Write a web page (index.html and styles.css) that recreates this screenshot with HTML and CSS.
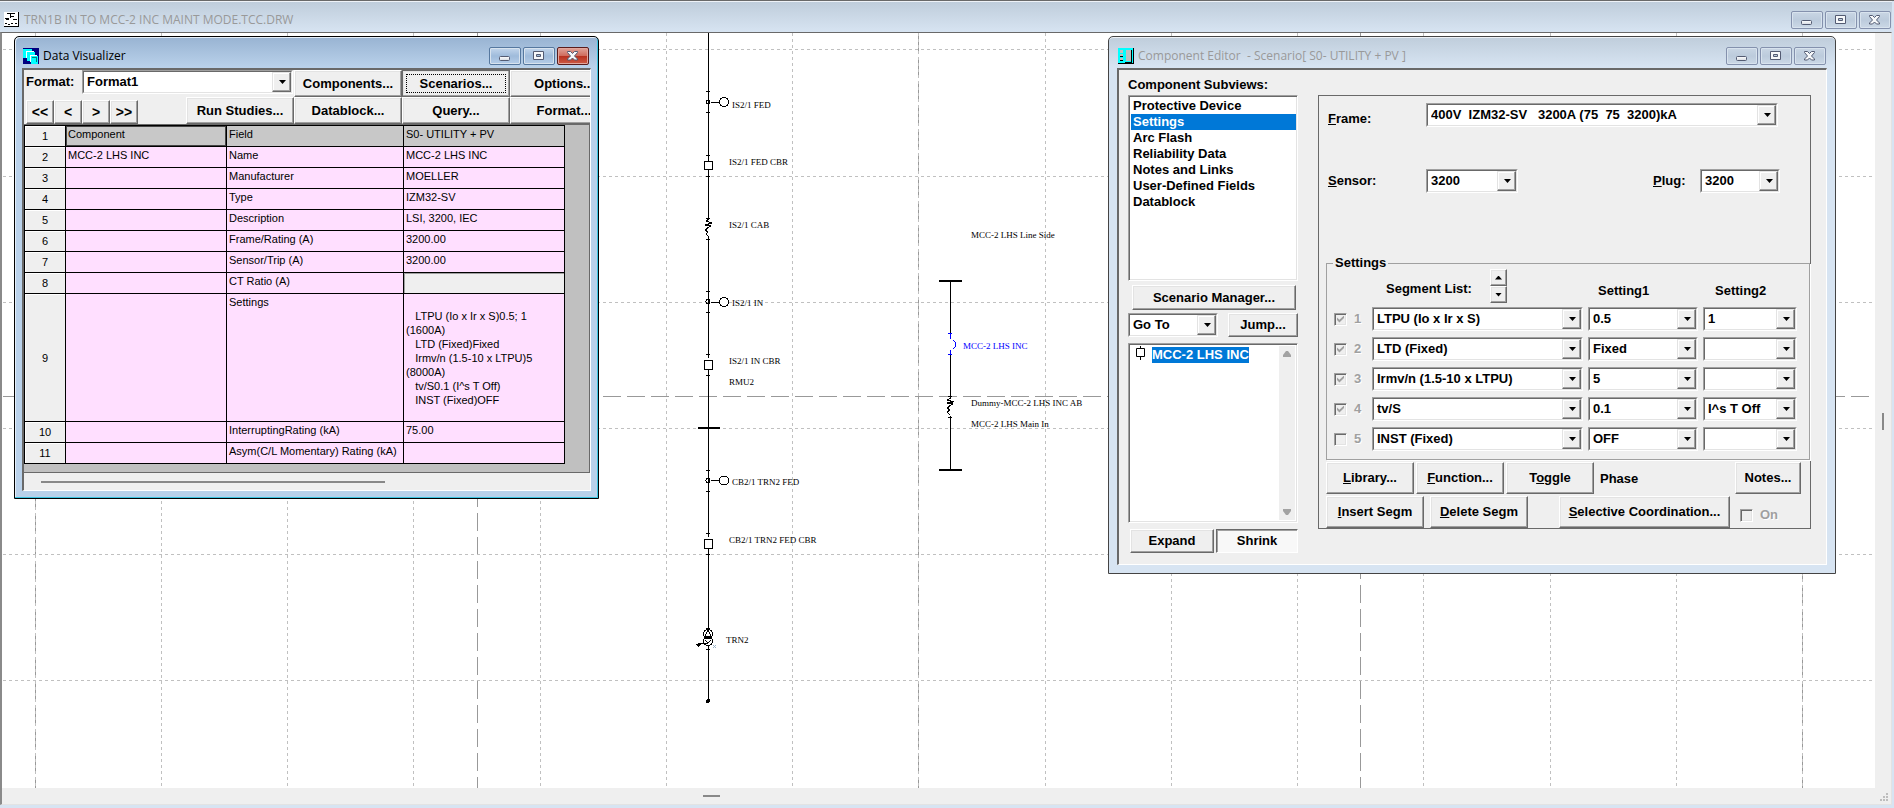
FILE: index.html
```html
<!DOCTYPE html>
<html lang="en">
<head>
<meta charset="utf-8">
<title>TRN1B IN TO MCC-2 INC MAINT MODE.TCC.DRW</title>
<link rel="stylesheet" href="styles.css">
</head>
<body>
<svg class="defs" width="0" height="0" aria-hidden="true">
  <defs>
    <linearGradient id="capfill" x1="0" y1="0" x2="0" y2="1"><stop offset="0" stop-color="#fff"/><stop offset="1" stop-color="#d5dae2"/></linearGradient>
    <symbol id="ic-min" viewBox="0 0 14 12"><rect x="1.5" y="6.5" width="10" height="4" rx="1" fill="url(#capfill)" stroke="#535b72"/></symbol>
    <symbol id="ic-max" viewBox="0 0 14 12"><path d="M1.5 1.500h10v8h-10zM4.500 4.500v2h4v-2z" fill="#f6f8fa" fill-rule="evenodd" stroke="#535b72"/></symbol>
    <symbol id="ic-close" viewBox="0 0 14 12"><path d="M1.500 1.500h3l2 2 2-2h3v1l-3 3.500 3 3v1h-3l-2-2-2 2h-3v-1l3-3-3-3.500z" fill="#f6f8fa" stroke="#535b72"/></symbol>
  </defs>
</svg>
<main class="app">
  <header class="titlebar">
    <svg class="app-icon" width="15" height="15" viewBox="0 0 15 15" shape-rendering="crispEdges" aria-hidden="true"><path d="M0 0h15v15H0z" fill="#fff"/><path d="M14.500 0v14.500H0" stroke="#000" fill="none"/><path d="M3 1.500h8M6.500 2v4M1 6.500h4M7 4.500h3M2 7.500h3M9 7.500h4M1 11.500h2M4 12.500h2M7 11.500h2M11 11.500h2" stroke="#000" fill="none"/></svg>
    <h1 class="title muted">TRN1B IN TO MCC-2 INC MAINT MODE.TCC.DRW</h1>
    <div class="caps">
      <button class="cap" aria-label="Minimize"><svg width="14" height="12"><use href="#ic-min"/></svg></button>
      <button class="cap" aria-label="Maximize"><svg width="14" height="12"><use href="#ic-max"/></svg></button>
      <button class="cap" aria-label="Close"><svg width="14" height="12"><use href="#ic-close"/></svg></button>
    </div>
  </header>
  <div class="workspace">
    <svg class="drawing" role="img" aria-label="One-line diagram">
      <g transform="translate(-2 -33)">
        <g class="grid-major">
          <path d="M35.500 33v755M477.500 33v755M918.500 33v755M1360.500 33v755M1802.500 33v755M3 396.500h1868"/>
        </g>
        <g class="grid-minor">
          <path d="M35.500 33v755M161.500 33v755M287.500 33v755M413.500 33v755M540.500 33v755M666.500 33v755M792.500 33v755M918.500 33v755M1045.500 33v755M1171.500 33v755M1297.500 33v755M1423.500 33v755M1550.500 33v755M1676.500 33v755M1802.500 33v755"/>
          <path d="M3 49.500h1870M3 176.500h1870M3 302.500h1870M3 428.500h1870M3 554.500h1870M3 680.500h1870"/>
        </g>
        <g class="wire">
          <path d="M708.500 33v128M708.500 170v49M708.500 236v122M708.500 370v167M708.500 549v82M708.500 646v55"/>
          <path d="M706 91.500h4M706 112.500h4M706 155.500h4M706 176.500h4M706 218.500h4M706 239.500h4M706 291.500h4M706 312.500h4M706 354.500h4M706 375.500h4M706 470.500h4M706 491.500h4M706 533.500h4M706 554.500h4M706 628.500h4M706 649.500h4"/>
          <path d="M704.500 161.500h8v8h-8zM704.500 360.500h8v9h-8zM704.500 539.500h8v9h-8z" fill="#fff"/>
          <path d="M711 102.500h9M711 302.500h9M711 480.500h9"/>
          <g fill="#fff"><circle cx="724" cy="102" r="4.500"/><circle cx="724" cy="302" r="4.500"/><circle cx="724" cy="480.500" r="4.500"/></g>
          <g fill="none"><circle cx="708" cy="102" r="2"/><circle cx="708" cy="301.500" r="2"/><circle cx="708" cy="480.500" r="2"/></g>
          <path d="M698 427.500h22" stroke-width="2"/>
          <path d="M708.500 219l-2 2 5 2-6 2 5 1-3 2-2 2 2 2-1 2 1 2" fill="none"/>
          <g fill="none"><circle cx="708" cy="634" r="4.500"/><circle cx="708" cy="641" r="4.500"/><path d="M708 630l-3 6h6zM705 640l3 3 3-3M698 643.500h10"/></g>
          <path d="M695 644h6l-3 3zM704 636h8v3h-8z" fill="#000" stroke="none"/>
          <path d="M713 645l3 3M716 645l-3 3" stroke="#9ab4c8"/>
          <circle cx="708" cy="701" r="2" fill="#000" stroke="none"/>
          <path d="M939 281h23M939 470h23" stroke-width="2"/>
          <path d="M950.500 281v52M950.500 354v45M950.500 416v54M948 396.500h4M948 417.500h4"/>
          <path d="M950.500 398l-3 2 6 2-6 1 5 1-3 2-2 2 2 2-2 2 2 3" fill="none"/>
          <path class="selected" d="M948 333.500h4M950.500 334v5M953 340q6 4 0 9M950.500 350v4M948 354.500h4" fill="none"/>
        </g>
        <g class="tags">
          <text x="732" y="108">IS2/1 FED</text>
          <text x="729" y="165">IS2/1 FED CBR</text>
          <text x="729" y="228">IS2/1 CAB</text>
          <text x="732" y="306">IS2/1 IN</text>
          <text x="729" y="364">IS2/1 IN CBR</text>
          <text x="729" y="385">RMU2</text>
          <text x="732" y="485">CB2/1 TRN2 FED</text>
          <text x="729" y="543">CB2/1 TRN2 FED CBR</text>
          <text x="726" y="643">TRN2</text>
          <text x="971" y="238">MCC-2 LHS Line Side</text>
          <text class="selected-tag" x="963" y="349">MCC-2 LHS INC</text>
          <text x="971" y="406">Dummy-MCC-2 LHS INC AB</text>
          <text x="971" y="427">MCC-2 LHS Main In</text>
        </g>
      </g>
    </svg>
    <div class="vbar"><span class="vthumb"></span></div>
    <div class="hbar"><span class="hthumb"></span></div>
    <svg class="grip" width="9" height="9" viewBox="0 0 9 9" aria-hidden="true"><path d="M6 0h2v2H6zM3 3h2v2H3zM6 3h2v2H6zM0 6h2v2H0zM3 6h2v2H3zM6 6h2v2H6z" fill="#bdbdbd"/></svg>
  </div>

  <section class="window visualizer" aria-label="Data Visualizer">
    <header class="wintitle">
      <svg width="16" height="16" viewBox="0 0 16 16" shape-rendering="crispEdges" aria-hidden="true"><path d="M0 0h16v16H0z" fill="#000080"/><path d="M0 1h9v3H5v6H0z" fill="#00ffff"/><path d="M4 4h8v3H8v6H4z" fill="#00ffff"/><path d="M8 8h7v8H8z" fill="#00ffff"/><path d="M3.500 10V3.500H11M7.500 14V7.500H14" stroke="#fff" fill="none"/><path d="M9 9.500h4v4" stroke="#008080" fill="none"/></svg>
      <h2 class="title">Data Visualizer</h2>
      <div class="caps">
        <button class="cap" aria-label="Minimize"><svg width="14" height="12"><use href="#ic-min"/></svg></button>
        <button class="cap" aria-label="Maximize"><svg width="14" height="12"><use href="#ic-max"/></svg></button>
        <button class="cap cap-close" aria-label="Close"><svg width="14" height="12"><use href="#ic-close"/></svg></button>
      </div>
    </header>
    <div class="client">
      <div class="toolbar">
        <label class="format-label" for="format">Format:</label>
        <span class="combo format-combo"><select id="format"><option>Format1</option></select></span>
        <button class="btn tool">Components...</button>
        <button class="btn tool focused">Scenarios...</button>
        <button class="btn tool">Options...</button>
      </div>
      <div class="toolbar second">
        <div class="nav"><button class="btn">&lt;&lt;</button><button class="btn">&lt;</button><button class="btn">&gt;</button><button class="btn">&gt;&gt;</button></div>
        <button class="btn tool">Run Studies...</button>
        <button class="btn tool">Datablock...</button>
        <button class="btn tool">Query...</button>
        <button class="btn tool">Format...</button>
      </div>
      <div class="sheet">
        <table>
          <colgroup><col class="c-num"><col class="c-comp"><col class="c-field"><col class="c-value"></colgroup>
          <tr class="head"><th>1</th><td class="current">Component</td><td>Field</td><td>S0- UTILITY + PV</td></tr>
          <tr><th>2</th><td>MCC-2 LHS INC</td><td>Name</td><td>MCC-2 LHS INC</td></tr>
          <tr><th>3</th><td></td><td>Manufacturer</td><td>MOELLER</td></tr>
          <tr><th>4</th><td></td><td>Type</td><td>IZM32-SV</td></tr>
          <tr><th>5</th><td></td><td>Description</td><td>LSI, 3200, IEC</td></tr>
          <tr><th>6</th><td></td><td>Frame/Rating (A)</td><td>3200.00</td></tr>
          <tr><th>7</th><td></td><td>Sensor/Trip (A)</td><td>3200.00</td></tr>
          <tr><th>8</th><td></td><td>CT Ratio (A)</td><td class="disabled"></td></tr>
          <tr class="tall"><th>9</th><td></td><td>Settings</td><td class="lines">
   LTPU (Io x Ir x S)0.5; 1
(1600A)
   LTD (Fixed)Fixed
   Irmv/n (1.5-10 x LTPU)5
(8000A)
   tv/S0.1 (I^s T Off)
   INST (Fixed)OFF</td></tr>
          <tr><th>10</th><td></td><td>InterruptingRating (kA)</td><td>75.00</td></tr>
          <tr><th>11</th><td></td><td>Asym(C/L Momentary) Rating (kA)</td><td></td></tr>
        </table>
      </div>
      <div class="sheetbar"><span></span></div>
    </div>
  </section>

  <section class="window editor" aria-label="Component Editor">
    <header class="wintitle">
      <svg width="16" height="16" viewBox="0 0 16 16" shape-rendering="crispEdges" aria-hidden="true"><path d="M0 0h16v16H0z" fill="#000"/><path d="M0 0h15v15H0z" fill="#00ffff"/><path d="M2 2h3v3H2zM2 6h3v3H2zM2 10h3v3H2zM8 2h5v11H8z" fill="#c0c0c0"/><path d="M2 8.500h3M2 12.500h3M7 14.500h6.500V2" stroke="#000" fill="none"/></svg>
      <h2 class="title muted">Component Editor&nbsp; - Scenario[ S0- UTILITY + PV ]</h2>
      <div class="caps">
        <button class="cap" aria-label="Minimize"><svg width="14" height="12"><use href="#ic-min"/></svg></button>
        <button class="cap" aria-label="Maximize"><svg width="14" height="12"><use href="#ic-max"/></svg></button>
        <button class="cap" aria-label="Close"><svg width="14" height="12"><use href="#ic-close"/></svg></button>
      </div>
    </header>
    <div class="client editor-body">
      <div class="side">
        <h3 class="side-title" id="subviews">Component Subviews:</h3>
        <ul class="well subviews" aria-labelledby="subviews">
          <li>Protective Device</li><li class="on">Settings</li><li>Arc Flash</li><li>Reliability Data</li><li>Notes and Links</li><li>User-Defined Fields</li><li>Datablock</li>
        </ul>
        <button class="btn manager">Scenario Manager...</button>
        <div class="jump-row">
          <span class="combo"><select aria-label="Go To"><option>Go To</option></select></span>
          <button class="btn">Jump...</button>
        </div>
        <div class="well tree">
          <div class="node"><svg width="10" height="14" viewBox="0 0 10 14" aria-hidden="true"><path d="M.5 2.500h8v8h-8zM4.500 0v3M4.500 10v4" fill="#fff" stroke="#000"/></svg><span class="on">MCC-2 LHS INC</span></div>
          <div class="treebar"><svg width="8" height="6" viewBox="0 0 8 6"><path d="M3 0h2l3 4v2H0V4z" fill="#a3a3a3"/></svg><svg width="8" height="6" viewBox="0 0 8 6"><path d="M3 6h2l3-4V0H0v2z" fill="#a3a3a3"/></svg></div>
        </div>
        <div class="size-row"><button class="btn">Expand</button><button class="btn pressed">Shrink</button></div>
      </div>
      <form class="panel">
        <div class="line">
          <label class="frame-label" for="frame"><u>F</u>rame:</label>
          <span class="combo frame"><select id="frame"><option>400V&nbsp; IZM32-SV&nbsp;&nbsp; 3200A (75&nbsp; 75&nbsp; 3200)kA</option></select></span>
        </div>
        <div class="line">
          <label for="sensor"><u>S</u>ensor:</label>
          <span class="combo sensor"><select id="sensor"><option>3200</option></select></span>
          <label class="plug-label" for="plug"><u>P</u>lug:</label>
          <span class="combo plug"><select id="plug"><option>3200</option></select></span>
        </div>
        <fieldset>
          <legend>Settings</legend>
          <div class="seg-head">
            <span class="seg-title">Segment List:</span>
            <span class="spin"><button type="button" class="btn" aria-label="Up"><i class="up"></i></button><button type="button" class="btn" aria-label="Down"><i class="down"></i></button></span>
            <span class="set-title">Setting1</span><span class="set-title">Setting2</span>
          </div>
          <div class="segs">
            <label class="tick"><input type="checkbox" checked disabled>1</label>
            <span class="combo"><select aria-label="Segment 1"><option>LTPU (Io x Ir x S)</option></select></span>
            <span class="combo"><select aria-label="Segment 1 setting 1"><option>0.5</option></select></span>
            <span class="combo"><select aria-label="Segment 1 setting 2"><option>1</option></select></span>
            <label class="tick"><input type="checkbox" checked disabled>2</label>
            <span class="combo"><select aria-label="Segment 2"><option>LTD (Fixed)</option></select></span>
            <span class="combo"><select aria-label="Segment 2 setting 1"><option>Fixed</option></select></span>
            <span class="combo"><select aria-label="Segment 2 setting 2"><option></option></select></span>
            <label class="tick"><input type="checkbox" checked disabled>3</label>
            <span class="combo"><select aria-label="Segment 3"><option>Irmv/n (1.5-10 x LTPU)</option></select></span>
            <span class="combo"><select aria-label="Segment 3 setting 1"><option>5</option></select></span>
            <span class="combo"><select aria-label="Segment 3 setting 2"><option></option></select></span>
            <label class="tick"><input type="checkbox" checked disabled>4</label>
            <span class="combo"><select aria-label="Segment 4"><option>tv/S</option></select></span>
            <span class="combo"><select aria-label="Segment 4 setting 1"><option>0.1</option></select></span>
            <span class="combo"><select aria-label="Segment 4 setting 2"><option>I^s T Off</option></select></span>
            <label class="tick"><input type="checkbox" disabled>5</label>
            <span class="combo"><select aria-label="Segment 5"><option>INST (Fixed)</option></select></span>
            <span class="combo"><select aria-label="Segment 5 setting 1"><option>OFF</option></select></span>
            <span class="combo"><select aria-label="Segment 5 setting 2"><option></option></select></span>
          </div>
        </fieldset>
        <div class="actions">
          <button type="button" class="btn w-s"><span><u>L</u>ibrary...</span></button>
          <button type="button" class="btn w-s"><span><u>F</u>unction...</span></button>
          <button type="button" class="btn w-s"><span>T<u>o</u>ggle</span></button>
          <span class="phase">Phase</span>
          <button type="button" class="btn notes">Notes...</button>
        </div>
        <div class="actions">
          <button type="button" class="btn w-m"><span><u>I</u>nsert Segm</span></button>
          <button type="button" class="btn w-m"><span><u>D</u>elete Segm</span></button>
          <button type="button" class="btn selective"><span><u>S</u>elective Coordination...</span></button>
          <label class="tick on-tick"><input type="checkbox" disabled>On</label>
        </div>
      </form>
    </div>
  </section>
</main>
</body>
</html>
```
FILE: styles.css
```css
* { box-sizing: border-box; }
body {
  margin: 0;
  height: 100vh;
  overflow: hidden;
  font: bold 13px/16px "Liberation Sans", Arial, sans-serif;
  color: #000;
  background: #d7e4f2;
}
h1, h2, h3, ul { margin: 0; padding: 0; font-size: inherit; }
button, select, input { font: inherit; color: inherit; margin: 0; }
.defs { position: absolute; }

.app {
  position: relative;
  height: 100vh;
  display: flex;
  flex-direction: column;
  padding: 0 2px 3px 0;
  border-top: 1px solid #696969;
}
.titlebar {
  display: flex;
  align-items: center;
  gap: 5px;
  height: 31px;
  padding: 5px 1px 0 4px;
  border-top: 1px solid #eef2f7;
  background: linear-gradient(#bfcddb, #d7e4f2);
}
.title {
  flex: 1;
  font: 12px/16px "Open Sans", "Noto Sans", sans-serif;
  white-space: nowrap;
}
.muted { color: #999; }
.caps { display: flex; gap: 2px; }
.cap {
  display: flex;
  align-items: center;
  justify-content: center;
  width: 32px;
  height: 18px;
  padding: 0;
  border: 1px solid #8491ad;
  border-radius: 2px;
  background: linear-gradient(#c9d6e4, #bccbdc 50%, #cbd8e6);
  box-shadow: inset 0 0 0 1px #d8e3ee;
}

.workspace {
  flex: 1;
  display: grid;
  grid-template-columns: minmax(0, 1fr) 16px;
  grid-template-rows: minmax(0, 1fr) 16px;
  border: solid;
  border-width: 1px 1px 1px 2px;
  border-color: #696969 #e3e3e3 #e3e3e3 #8a8a8a;
  background: #efefef;
}
.drawing { width: 100%; height: 100%; background: #fff; }
.grid-major path { stroke: #999; stroke-dasharray: 18 6; fill: none; }
.grid-minor path { stroke: #c0c0c0; stroke-dasharray: 3 3; fill: none; }
.wire { stroke: #000; shape-rendering: crispEdges; }
.wire .selected { stroke: #0000ff; }
.tags { font: 9px "Liberation Serif", serif; }
.selected-tag { fill: #0000ff; }
.vbar, .hbar { display: flex; align-items: center; justify-content: center; }
.vbar { padding-top: 22px; }
.hbar { justify-content: flex-start; padding-left: 37.4%; }
.vthumb { width: 2px; height: 17px; background: #888; }
.hthumb { width: 17px; height: 2px; background: #888; }
.grip { place-self: end; margin: 0 2px 2px 0; }

.window {
  position: absolute;
  display: flex;
  flex-direction: column;
  border: 1px solid #444;
  border-radius: 5px 5px 0 0;
  padding: 0 7px 7px;
}
.visualizer {
  left: 14px;
  top: 35px;
  width: 585px;
  border-color: #000;
  background: linear-gradient(#98b3d2, #b9d1ea 30px);
  box-shadow: inset -1px -1px #3cc4e0, inset 1px 1px #e4eef8;
}
.editor {
  left: 1108px;
  top: 35px;
  width: 728px;
  padding: 0 8px 8px;
  background: linear-gradient(#bfcddb, #d7e4f2 30px);
  box-shadow: inset 0 1px #eef2f7;
}
.wintitle {
  display: flex;
  align-items: center;
  gap: 4px;
  height: 31px;
  padding: 6px 1px 0;
}
.visualizer .wintitle { padding-right: 2px; }
.cap-close {
  border-color: #5a1c1c;
  background: linear-gradient(#dfa49a, #cf6a5b 50%, #b8311f 51%, #cc5a45);
  box-shadow: inset 0 0 0 1px #e2a69d;
}
.visualizer .cap:not(.cap-close) {
  border-color: #56789f;
  background: linear-gradient(#c3d6ec, #9fbbdb 50%, #b5cde8);
}
.client {
  border: solid;
  border-width: 2px 1px 1px 2px;
  border-color: #696969 #fff #fff #696969;
  background: #efefef;
}

.btn {
  padding: 0;
  border: 1px solid;
  border-color: #fff #696969 #696969 #fff;
  box-shadow: inset -1px -1px #a0a0a0, inset 1px 1px #e3e3e3;
  border-radius: 0;
  background: #efefef;
  white-space: nowrap;
}
.combo {
  position: relative;
  display: block;
  height: 24px;
  border: 1px solid;
  border-color: #a0a0a0 #fff #fff #a0a0a0;
}
.combo select {
  display: block;
  width: 100%;
  height: 100%;
  padding: 0 18px 1px 3px;
  appearance: none;
  border: 1px solid;
  border-color: #696969 #e3e3e3 #e3e3e3 #696969;
  border-radius: 0;
  background: #fff;
}
.combo::before {
  content: "";
  position: absolute;
  top: 1px;
  right: 1px;
  bottom: 1px;
  width: 17px;
  border: 1px solid;
  border-color: #e3e3e3 #696969 #696969 #e3e3e3;
  box-shadow: inset -1px -1px #a0a0a0, inset 1px 1px #fff;
  background: #efefef;
  pointer-events: none;
}
.combo::after, .up, .down {
  content: "";
  width: 7px;
  height: 4px;
  background: #000;
  clip-path: polygon(0 0, 100% 0, 50% 100%);
}
.combo::after {
  position: absolute;
  top: 9px;
  right: 6px;
  pointer-events: none;
}
.up { clip-path: polygon(0 100%, 100% 100%, 50% 0); }

.toolbar { display: flex; height: 27px; overflow: hidden; }
.format-label { flex: none; width: 58px; padding: 4px 0 0 2px; }
.format-combo { flex: none; width: 211px; margin-right: 1px; }
.tool { flex: none; width: 108px; }
.tool.focused { outline: 1px dotted #000; outline-offset: -5px; border-color: #696969; }
.nav { flex: none; display: flex; align-items: flex-end; width: 162px; padding-left: 2px; }
.nav .btn { width: 28px; height: 24px; font-size: 14px; }
.sheet {
  padding-bottom: 8px;
  border: solid #696969;
  border-width: 1px 1px 1px 0;
  background: #c0c0c0;
}
table {
  width: 540px;
  table-layout: fixed;
  border-collapse: collapse;
  font: 11px/14px "Liberation Sans", Arial, sans-serif;
}
.c-num { width: 41px; }
.c-comp { width: 161px; }
.c-field { width: 177px; }
.c-value { width: 161px; }
th, td {
  height: 21px;
  padding: 1px 2px 0;
  border: 1px solid #000;
  vertical-align: top;
  text-align: left;
  white-space: nowrap;
}
td { background: #ffdfff; }
th {
  padding: 0;
  vertical-align: middle;
  text-align: center;
  font-weight: normal;
  background: #efefef;
  box-shadow: inset 1px 1px #fff;
}
.head td { background: #c8c8c8; }
.head .current { box-shadow: inset 0 0 0 1px #444; }
td.disabled { background: #efefef; box-shadow: inset 1px 1px #a0a0a0; }
.tall td { height: 128px; }
.lines { white-space: pre; }
.sheetbar { height: 17px; padding: 8px 0 0 17px; }
.sheetbar span { display: block; width: 344px; height: 2px; background: #888; }

.editor-body { display: flex; gap: 20px; padding: 4px 15px 10px 9px; }
.side { flex: none; width: 170px; display: flex; flex-direction: column; }
.side-title { line-height: 21px; }
.well {
  border: 1px solid;
  border-color: #a0a0a0 #fff #fff #a0a0a0;
  box-shadow: inset 1px 1px #696969, inset -1px -1px #e3e3e3;
  background: #fff;
}
.subviews { height: 186px; padding: 2px 1px; list-style: none; }
.subviews li { padding-left: 2px; margin-left: 1px; }
.on { color: #fff; background: #0078d7; }
.manager { height: 25px; margin: 4px 2px 3px 4px; }
.jump-row { display: grid; grid-template-columns: 90px 70px; justify-content: space-between; height: 24px; margin-bottom: 6px; }
.tree { display: flex; justify-content: space-between; height: 180px; padding: 2px; }
.node { display: flex; align-items: flex-start; gap: 6px; padding: 0 0 0 5px; }
.node .on { margin-top: 1px; }
.treebar { display: flex; flex-direction: column; justify-content: space-between; align-items: center; width: 16px; padding: 5px 0; background: #efefef; }
.size-row { display: grid; grid-template-columns: 84px 82px; justify-content: end; gap: 2px; height: 24px; margin-top: 6px; }
.pressed { border-color: #696969 #fff #fff #696969; box-shadow: inset 1px 1px #a0a0a0; background: #f8f8f8; }

.panel {
  flex: 1;
  margin: 21px 0 25px;
  padding-top: 7px;
  border: 1px solid #696969;
}
.line { display: flex; padding: 0 30px 0 9px; margin-bottom: 42px; }
.line label { width: 98px; padding-top: 4px; }
.line .frame-label { padding-top: 8px; }
.line .plug-label { width: 47px; margin-left: auto; }
.frame { width: 352px; }
.sensor { width: 92px; }
.plug { width: 80px; }
fieldset {
  margin: 64px 0 2px 7px;
  padding: 0 0 8px 6px;
  border: 1px solid #a0a0a0;
  box-shadow: 1px 1px #fff;
}
legend { padding: 0 2px; line-height: 12px; }
.seg-head, .segs { display: grid; grid-template-columns: 33px 211px 110px 94px; gap: 6px 5px; }
.seg-head { grid-template-columns: 157px 87px 112px 94px; height: 34px; margin-bottom: 4px; }
.seg-title { padding: 12px 0 0 53px; white-space: nowrap; }
.set-title { padding: 14px 0 0 11px; }
.spin { display: grid; width: 17px; margin-left: -5px; }
.spin .btn { display: flex; align-items: center; justify-content: center; }
.segs { padding-left: 1px; }
.tick { display: flex; align-items: center; gap: 7px; color: #a0a0a0; text-shadow: 1px 1px #fff; }
.tick input {
  appearance: none;
  width: 13px;
  height: 13px;
  border: 1px solid;
  border-color: #a0a0a0 #fff #fff #a0a0a0;
  box-shadow: inset 1px 1px #696969, inset -1px -1px #e3e3e3;
}
.tick input:checked::before {
  content: "";
  display: block;
  width: 7px;
  height: 7px;
  margin: 2px;
  background: #a0a0a0;
  clip-path: polygon(0 30%, 35% 60%, 100% 0, 100% 35%, 35% 100%, 0 65%);
}
.actions { display: flex; gap: 2px; height: 32px; margin: 0 9px 2px 7px; }
.actions:last-child { margin-bottom: 0; }
.w-s { width: 88px; }
.w-m { width: 98px; margin-right: 4px; }
.phase { padding: 9px 0 0 4px; }
.notes { width: 66px; margin-left: auto; }
.selective { width: 171px; margin-left: 25px; }
.on-tick { padding: 6px 0 0 8px; }
```
